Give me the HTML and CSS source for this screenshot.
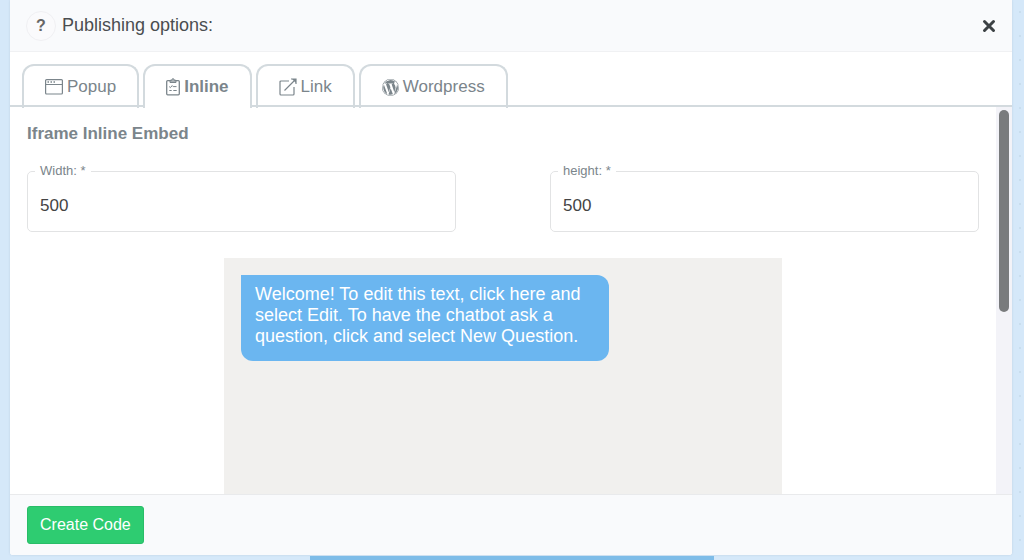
FILE: index.html
```
<!DOCTYPE html>
<html lang="en">

<head>
    <meta charset="UTF-8">
    <meta name="viewport" content="width=device-width, initial-scale=1.0">
    <title>Publishing options</title>
    <link rel="stylesheet" href="styles.css">
</head>

<body>
    <div class="modal" role="dialog" aria-labelledby="modalTitle">
        <!-- Header -->
        <div class="modal-header">
            <button type="button" class="help-btn" aria-label="Help">?</button>
            <h1 id="modalTitle" class="modal-title">Publishing options:</h1>
            <button type="button" class="close-btn" aria-label="Close">
                <svg width="14" height="14" viewBox="0 0 14 14">
                    <path d="M2.500 2.500l9 9M11.500 2.500l-9 9" fill="none" stroke="#3c4144" stroke-width="3" stroke-linecap="round"/>
                </svg>
            </button>
        </div>

        <!-- Tabs -->
        <div class="tabs" role="tablist">
            <button type="button" class="tab" role="tab">
                <svg class="icon" width="18" height="18" viewBox="0 0 18 18">
                    <g fill="none" stroke="currentColor">
                        <rect x=".6" y="1.600" width="16.800" height="14.400" rx="1" stroke-width="1.200"/>
                        <path d="M.5 6.500h17"/>
                        <path d="M2.500 4h1.500M5.500 4h1.500M8.500 4h1.500" stroke-width="1.500"/>
                    </g>
                </svg>
                Popup
            </button>
            <button type="button" class="tab active" role="tab" aria-selected="true">
                <svg class="icon" width="14" height="18" viewBox="0 0 14 18">
                    <g fill="none" stroke="currentColor">
                        <rect x=".7" y="2.600" width="12.600" height="14.200" rx="1" stroke-width="1.300"/>
                        <path d="M4 4.500V2.300h1.600C5.600.2 8.400.2 8.400 2.300H10v2.200z" fill="#a9b0b4"/>
                        <path d="M3.200 8.600l1.200 1 1.800-2 1 1h3.300M3.300 12.500h2.400M7.300 12.500h3.400"/>
                    </g>
                </svg>
                Inline
            </button>
            <button type="button" class="tab" role="tab">
                <svg class="icon" width="18" height="18" viewBox="0 0 18 18">
                    <g fill="none" stroke="currentColor" stroke-width="1.200">
                        <path d="M10 3H2Q1 3 1 4v12q0 1 1 1h12q1 0 1-1V9"/>
                        <path d="M5.500 12.500L16.500 1.500M12 1h5v5"/>
                    </g>
                    <path d="M13 1h4v4z" fill="currentColor"/>
                </svg>
                Link
            </button>
            <button type="button" class="tab" role="tab">
                <svg class="icon" width="17" height="17" viewBox="0 0 24 24" fill="currentColor">
                    <path d="M12 0a12 12 0 1 0 0 24 12 12 0 0 0 0-24zm0 23.200A11.200 11.200 0 1 1 12 .8a11.200 11.200 0 0 1 0 22.400z"/>
                    <path d="M1.700 12c0 4 2.400 7.600 5.800 9.300L2.600 7.800A10.200 10.200 0 0 0 1.700 12zm17.300-.5c0-1.300-.5-2.200-.9-2.900-.5-.9-1-1.600-1-2.500 0-1 .7-1.900 1.800-1.900h.1A10.300 10.300 0 0 0 3.400 6.400h.7c1.100 0 2.700-.1 2.700-.1.600 0 .6.800.1.900 0 0-.6.1-1.200.1l3.900 11.500 2.300-7-1.600-4.500c-.6 0-1.100-.1-1.100-.1-.6 0-.5-.9.1-.9 0 0 1.700.1 2.700.1 1.100 0 2.700-.1 2.700-.1.600 0 .7.800.1.900 0 0-.6.1-1.200.1l3.800 11.400 1.100-3.500c.4-1.500.8-2.500.8-3.400zm-6.800 1.400l-3.100 9a10.200 10.200 0 0 0 6.300-.2zM21 7c.1.400.1.800.1 1.200 0 1.200-.2 2.500-.9 4.200l-3.100 9A10.300 10.300 0 0 0 21 7z"/>
                </svg>
                Wordpress
            </button>
        </div>

        <!-- Scrolling content -->
        <div class="modal-body">
            <div class="content">
                <h2 class="section-title">Iframe Inline Embed</h2>
                <div class="fields">
                    <fieldset class="field">
                        <legend><label for="width">Width: *</label></legend>
                        <input type="text" id="width" value="500" required>
                    </fieldset>
                    <fieldset class="field">
                        <legend><label for="height">height: *</label></legend>
                        <input type="text" id="height" value="500" required>
                    </fieldset>
                </div>
                <div class="preview">
                    <p class="bubble">Welcome! To edit this text, click here and select Edit. To have the chatbot ask a question, click and select New Question.</p>
                </div>
            </div>
            <div class="scroll-track">
                <div class="scroll-thumb"></div>
            </div>
        </div>

        <!-- Footer -->
        <div class="modal-footer">
            <button type="button" class="create-btn">Create Code</button>
        </div>
    </div>
    <div class="page-block"></div>
</body>

</html>
```
FILE: styles.css
```
* {
    box-sizing: border-box;
}

body {
    display: flex;
    flex-direction: column;
    height: 100vh;
    margin: 0;
    overflow: hidden;
    font-family: "Liberation Sans", Arial, sans-serif;
    color: #7b858b;
    background-color: #d5e8f9;
    background-image: radial-gradient(circle, #c9deee 1px, transparent 1px);
    background-size: 24px 24px;
}

button {
    font-family: inherit;
    cursor: pointer;
}

.modal {
    display: flex;
    flex: 1;
    flex-direction: column;
    min-height: 0;
    margin: 0 12px 1px 10px;
    background-color: #fff;
    border-radius: 0 0 3px 3px;
    box-shadow: 0 0 2px rgba(120, 140, 160, 0.3);
}

.modal-header {
    display: flex;
    align-items: center;
    gap: 6px;
    height: 52px;
    padding: 0 16px;
    background-color: #f9fafc;
    border-bottom: 1px solid #f0f1f3;
}

.help-btn {
    width: 30px;
    height: 30px;
    padding: 0;
    font-size: 16px;
    font-weight: bold;
    color: #666;
    background-color: #fafafc;
    border: 1px solid #f0f0f3;
    border-radius: 50%;
}

.modal-title {
    flex: 1;
    margin: 0;
    font-size: 18px;
    font-weight: normal;
    color: #4a4d50;
}

.close-btn {
    display: flex;
    padding: 0;
    background: none;
    border: none;
}

.tabs {
    display: flex;
    gap: 4px;
    padding: 12px 12px 0;
    border-bottom: 2px solid #d3dade;
}

.tab {
    display: flex;
    align-items: center;
    gap: 4px;
    height: 44px;
    margin-bottom: -3px;
    padding: 0 21px;
    font-size: 17px;
    color: #7b858b;
    background: none;
    border: 2px solid #d3dade;
    border-bottom: none;
    border-radius: 12px 12px 0 0;
}

.tab.active {
    font-weight: bold;
    background-color: #fff;
}

.modal-body {
    display: flex;
    flex: 1;
    min-height: 0;
}

.content {
    display: flex;
    flex: 1;
    flex-direction: column;
    padding: 17px 17px 0;
}

.section-title {
    margin: 0;
    font-size: 17px;
    line-height: 20px;
}

.fields {
    display: grid;
    grid-template-columns: 1fr 1fr;
    gap: 94px;
    padding: 19px 0 26px;
}

.field {
    min-width: 0;
    margin: 0;
    padding: 0 7px;
    border: 1px solid #e2e3e4;
    border-radius: 5px;
}

.field legend {
    padding: 0 5px;
    font-size: 13px;
    line-height: 16px;
}

.field input {
    width: 100%;
    height: 52px;
    padding: 2px 5px 0;
    font-family: inherit;
    font-size: 17px;
    color: #444;
    background: none;
    border: none;
    outline: none;
}

.preview {
    flex: 1;
    align-self: center;
    width: 100%;
    max-width: 558px;
    padding: 17px;
    background-color: #f1f0ee;
}

.bubble {
    max-width: 368px;
    margin: 0;
    padding: 9px 14px 14px;
    font-size: 18px;
    line-height: 21px;
    color: #fff;
    background-color: #6bb6f0;
    border-radius: 0 12px 12px 12px;
}

.scroll-track {
    width: 16px;
    padding: 3px;
    background-color: #f3f3f8;
}

.scroll-thumb {
    width: 10px;
    height: 53%;
    background-color: #797b7d;
    border-radius: 5px;
}

.modal-footer {
    padding: 11px 17px;
    background-color: #f9fafc;
    border-top: 1px solid #e9eaec;
    border-radius: 0 0 3px 3px;
}

.create-btn {
    display: block;
    height: 38px;
    padding: 0 12px;
    font-size: 16px;
    color: #fff;
    background-color: #2ecc71;
    border: 1px solid #29bd68;
    border-radius: 3px;
}

.page-block {
    align-self: center;
    width: 39.4%;
    height: 4px;
    background-color: #7ebce8;
}
```
